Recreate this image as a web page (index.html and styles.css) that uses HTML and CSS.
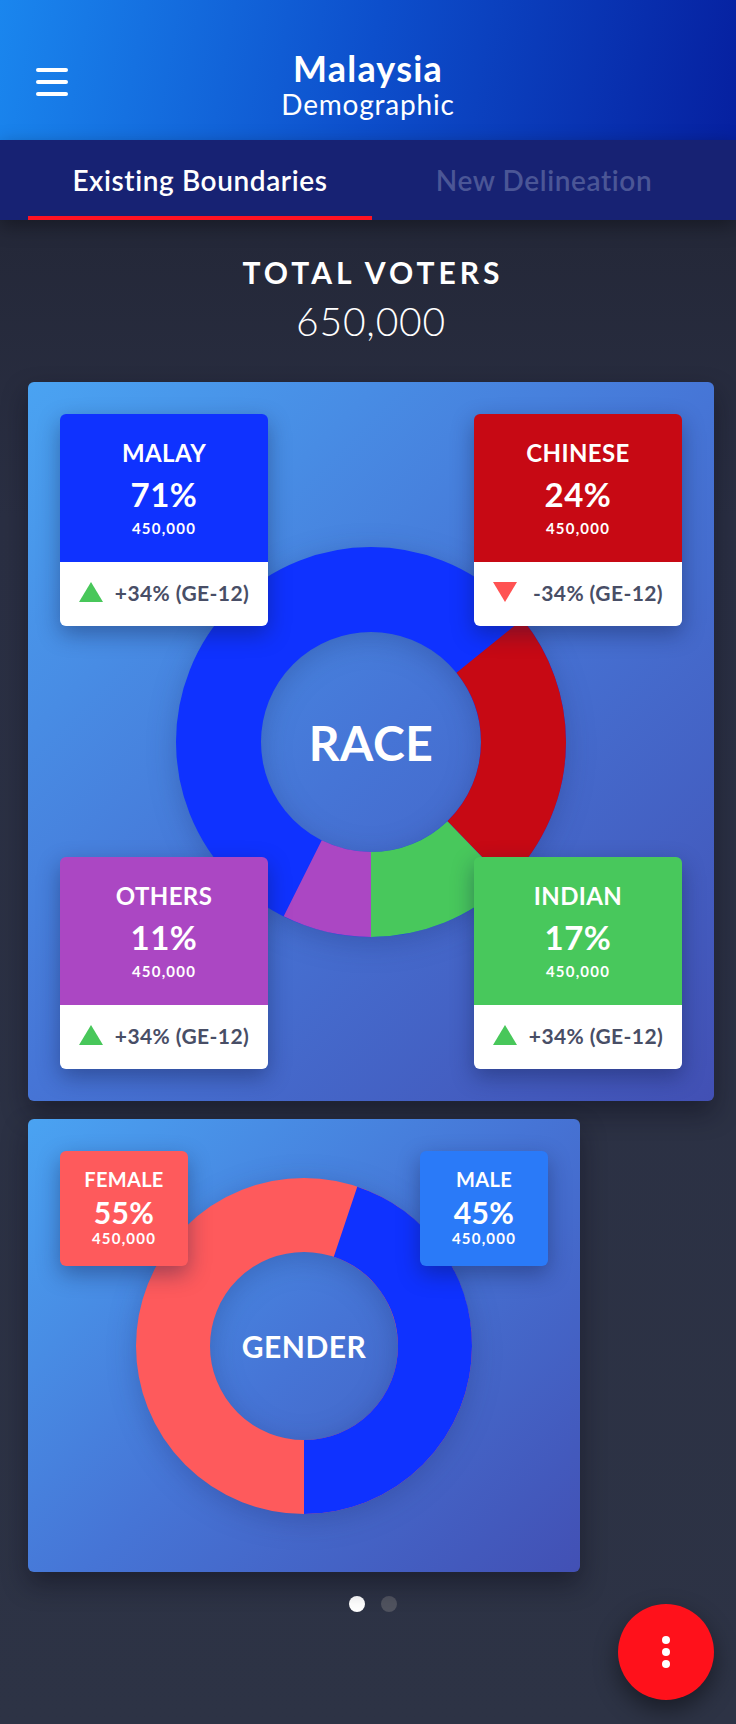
FILE: index.html
```html
<!DOCTYPE html>
<html lang="en">

<head>
    <meta charset="UTF-8">
    <meta name="viewport" content="width=device-width, initial-scale=1.0">
    <title>Malaysia Demographic</title>
    <link rel="stylesheet" href="styles.css">
</head>

<body>
    <header class="top-bar">
        <button class="menu-button" aria-label="Menu">
            <span></span>
            <span></span>
            <span></span>
        </button>
        <div class="title-block">
            <div class="title">Malaysia</div>
            <div class="subtitle">Demographic</div>
        </div>
        <div></div>
    </header>

    <nav class="tabs">
        <div class="tab active">Existing Boundaries</div>
        <div class="tab">New Delineation</div>
    </nav>

    <main class="content">
        <div class="total">
            <div class="total-label">TOTAL VOTERS</div>
            <div class="total-value">650,000</div>
        </div>

        <!-- race chart -->
        <section class="card race-card">
            <svg class="donut race-donut" viewBox="0 0 390 390" width="390" height="390">
                <g transform="rotate(-90 195 195)">
                    <circle cx="195" cy="195" r="152.5" fill="none" stroke="#0f32ff" stroke-width="85" />
                    <circle cx="195" cy="195" r="152.5" fill="none" stroke="#c70914" stroke-width="85"
                        pathLength="360" stroke-dasharray="85 360" stroke-dashoffset="-51" />
                    <circle cx="195" cy="195" r="152.5" fill="none" stroke="#48c85c" stroke-width="85"
                        pathLength="360" stroke-dasharray="44 360" stroke-dashoffset="-136" />
                    <circle cx="195" cy="195" r="152.5" fill="none" stroke="#ab47c3" stroke-width="85"
                        pathLength="360" stroke-dasharray="26.6 360" stroke-dashoffset="-180" />
                </g>
            </svg>
            <div class="donut-label race-label">RACE</div>

            <div class="stat">
                <div class="stat-top malay">
                    <div class="stat-name">MALAY</div>
                    <div class="stat-pct">71%</div>
                    <div class="stat-count">450,000</div>
                </div>
                <div class="stat-foot">
                    <span class="arrow up"></span>
                    <span class="change">+34% (GE-12)</span>
                </div>
            </div>
            <div class="stat">
                <div class="stat-top chinese">
                    <div class="stat-name">CHINESE</div>
                    <div class="stat-pct">24%</div>
                    <div class="stat-count">450,000</div>
                </div>
                <div class="stat-foot">
                    <span class="arrow down"></span>
                    <span class="change">-34% (GE-12)</span>
                </div>
            </div>
            <div class="stat">
                <div class="stat-top others">
                    <div class="stat-name">OTHERS</div>
                    <div class="stat-pct">11%</div>
                    <div class="stat-count">450,000</div>
                </div>
                <div class="stat-foot">
                    <span class="arrow up"></span>
                    <span class="change">+34% (GE-12)</span>
                </div>
            </div>
            <div class="stat">
                <div class="stat-top indian">
                    <div class="stat-name">INDIAN</div>
                    <div class="stat-pct">17%</div>
                    <div class="stat-count">450,000</div>
                </div>
                <div class="stat-foot">
                    <span class="arrow up"></span>
                    <span class="change">+34% (GE-12)</span>
                </div>
            </div>
        </section>

        <!-- gender chart -->
        <section class="card gender-card">
            <svg class="donut gender-donut" viewBox="0 0 336 336" width="336" height="336">
                <g transform="rotate(-90 168 168)">
                    <circle cx="168" cy="168" r="131" fill="none" stroke="#fe5a5c" stroke-width="74" />
                    <circle cx="168" cy="168" r="131" fill="none" stroke="#0f32ff" stroke-width="74"
                        pathLength="360" stroke-dasharray="161.5 360" stroke-dashoffset="-18.5" />
                </g>
            </svg>
            <div class="donut-label gender-label">GENDER</div>

            <div class="mini female">
                <div class="mini-name">FEMALE</div>
                <div class="mini-pct">55%</div>
                <div class="mini-count">450,000</div>
            </div>
            <div class="mini male">
                <div class="mini-name">MALE</div>
                <div class="mini-pct">45%</div>
                <div class="mini-count">450,000</div>
            </div>
        </section>

        <div class="pager">
            <span class="dot current"></span>
            <span class="dot"></span>
        </div>
    </main>

    <button class="fab" aria-label="More">
        <span></span>
        <span></span>
        <span></span>
    </button>
</body>

</html>
```

FILE: styles.css
```css
body {
    margin: 0;
    padding: 0;
    font-family: "Lato", "Open Sans", sans-serif;
    color: #ffffff;
    background: linear-gradient(180deg, #1f2230 0%, #2a2f43 30%, #2d3345 100%);
    min-height: 1724px;
    position: relative;
}

.top-bar {
    height: 140px;
    box-sizing: border-box;
    padding: 47px 36px 20px;
    display: grid;
    grid-template-columns: 1fr auto 1fr;
    align-items: center;
    background: linear-gradient(100deg, #1a86ee 0%, #0d4fcc 50%, #0620a0 100%);
}

.menu-button {
    width: 32px;
    height: 28px;
    margin-top: -4px;
    padding: 0;
    border: none;
    background: none;
    display: flex;
    flex-direction: column;
    justify-content: space-between;
    cursor: pointer;
}

.menu-button span {
    display: block;
    width: 32px;
    height: 4px;
    border-radius: 2px;
    background: #ffffff;
}

.title-block {
    text-align: center;
}

.title {
    font-size: 36px;
    line-height: 40px;
    font-weight: 700;
    letter-spacing: 1.2px;
}

.subtitle {
    font-size: 28px;
    line-height: 32px;
    font-weight: 400;
    letter-spacing: 0.8px;
}

.tabs {
    height: 80px;
    box-sizing: border-box;
    padding: 0 20px 0 28px;
    display: flex;
    background: #172273;
    box-shadow: 0 6px 18px rgba(0, 0, 0, 0.35);
    position: relative;
}

.tab {
    flex: 1;
    display: flex;
    align-items: center;
    justify-content: center;
    font-size: 28px;
    font-weight: 600;
    letter-spacing: 0.6px;
    color: #4b5696;
    border-bottom: 4px solid transparent;
    padding-top: 4px;
}

.tab.active {
    color: #ffffff;
    border-bottom-color: #ff1222;
}

.content {
    padding: 34px 22px 0 28px;
}

.total {
    text-align: center;
    margin-bottom: 38px;
}

.total-label {
    font-size: 30px;
    line-height: 36px;
    font-weight: 700;
    letter-spacing: 4px;
    padding-left: 4px;
}

.total-value {
    margin-top: 8px;
    font-size: 39px;
    line-height: 46px;
    font-weight: 300;
    letter-spacing: 0.8px;
}

.card {
    position: relative;
    box-sizing: border-box;
    padding: 32px;
    border-radius: 6px;
    background: linear-gradient(135deg, #4aa3f2 0%, #4675d6 50%, #4250b4 100%);
    box-shadow: 0 12px 26px rgba(10, 12, 25, 0.45);
}

.race-card {
    height: 719px;
    display: grid;
    grid-template-columns: 208px 208px;
    grid-template-rows: auto auto;
    justify-content: space-between;
    align-content: space-between;
}

.gender-card {
    width: 552px;
    height: 453px;
    margin-top: 18px;
    display: flex;
    justify-content: space-between;
    align-items: flex-start;
}

.donut {
    position: absolute;
    left: 50%;
    top: 50%;
    transform: translate(-50%, -50%);
    filter: drop-shadow(0 6px 14px rgba(20, 30, 90, 0.25));
}

.donut-label {
    position: absolute;
    left: 0;
    right: 0;
    top: 50%;
    transform: translateY(-50%);
    text-align: center;
    font-weight: 700;
}

.race-label {
    font-size: 48px;
    letter-spacing: 0.5px;
}

.gender-label {
    font-size: 30px;
    letter-spacing: 0.5px;
}

.stat {
    position: relative;
    z-index: 1;
    border-radius: 6px;
    overflow: hidden;
    box-shadow: 0 8px 22px rgba(15, 25, 70, 0.4);
}

.stat-top {
    height: 148px;
    box-sizing: border-box;
    padding-top: 25px;
    text-align: center;
}

.malay {
    background: #0f32ff;
}

.chinese {
    background: #c70914;
}

.others {
    background: #ab47c3;
}

.indian {
    background: #48c85c;
}

.stat-name {
    font-size: 24px;
    line-height: 28px;
    font-weight: 700;
    letter-spacing: 0.4px;
}

.stat-pct {
    margin-top: 7px;
    font-size: 33px;
    line-height: 40px;
    font-weight: 700;
    letter-spacing: 0.5px;
}

.stat-count,
.mini-count {
    margin-top: 5px;
    font-size: 15px;
    line-height: 18px;
    font-weight: 700;
    letter-spacing: 1.2px;
}

.stat-foot {
    height: 64px;
    box-sizing: border-box;
    padding-bottom: 4px;
    background: #ffffff;
    display: flex;
    align-items: center;
    justify-content: center;
    gap: 12px;
}

.change {
    font-size: 21px;
    font-weight: 700;
    color: #484e66;
    letter-spacing: 0.4px;
}

.arrow {
    width: 0;
    height: 0;
    border-left: 12px solid transparent;
    border-right: 12px solid transparent;
}

.arrow.up {
    border-bottom: 20px solid #48c75a;
}

.arrow.down {
    border-top: 20px solid #ff5252;
    margin-right: 4px;
}

.mini {
    position: relative;
    z-index: 1;
    width: 128px;
    height: 115px;
    box-sizing: border-box;
    padding-top: 16px;
    border-radius: 6px;
    text-align: center;
    box-shadow: 0 8px 22px rgba(15, 25, 70, 0.4);
}

.female {
    background: #fe5a5c;
}

.male {
    background: #2a7af8;
}

.mini-name {
    font-size: 20px;
    line-height: 24px;
    font-weight: 700;
    letter-spacing: 0.3px;
}

.mini-pct {
    margin-top: 4px;
    font-size: 30px;
    line-height: 34px;
    font-weight: 700;
    letter-spacing: 0.4px;
}

.mini-count {
    margin-top: 0;
}

.pager {
    display: flex;
    justify-content: center;
    gap: 16px;
    margin-top: 24px;
    padding-left: 4px;
}

.dot {
    width: 16px;
    height: 16px;
    border-radius: 50%;
    background: #50535f;
}

.dot.current {
    background: #ffffff;
}

.fab {
    position: absolute;
    right: 22px;
    bottom: 24px;
    width: 96px;
    height: 96px;
    border: none;
    border-radius: 50%;
    background: #ff111b;
    box-shadow: 0 10px 24px rgba(0, 0, 0, 0.45);
    display: flex;
    flex-direction: column;
    align-items: center;
    justify-content: center;
    gap: 4px;
    cursor: pointer;
}

.fab span {
    width: 8px;
    height: 8px;
    border-radius: 50%;
    background: #ffffff;
}
```
